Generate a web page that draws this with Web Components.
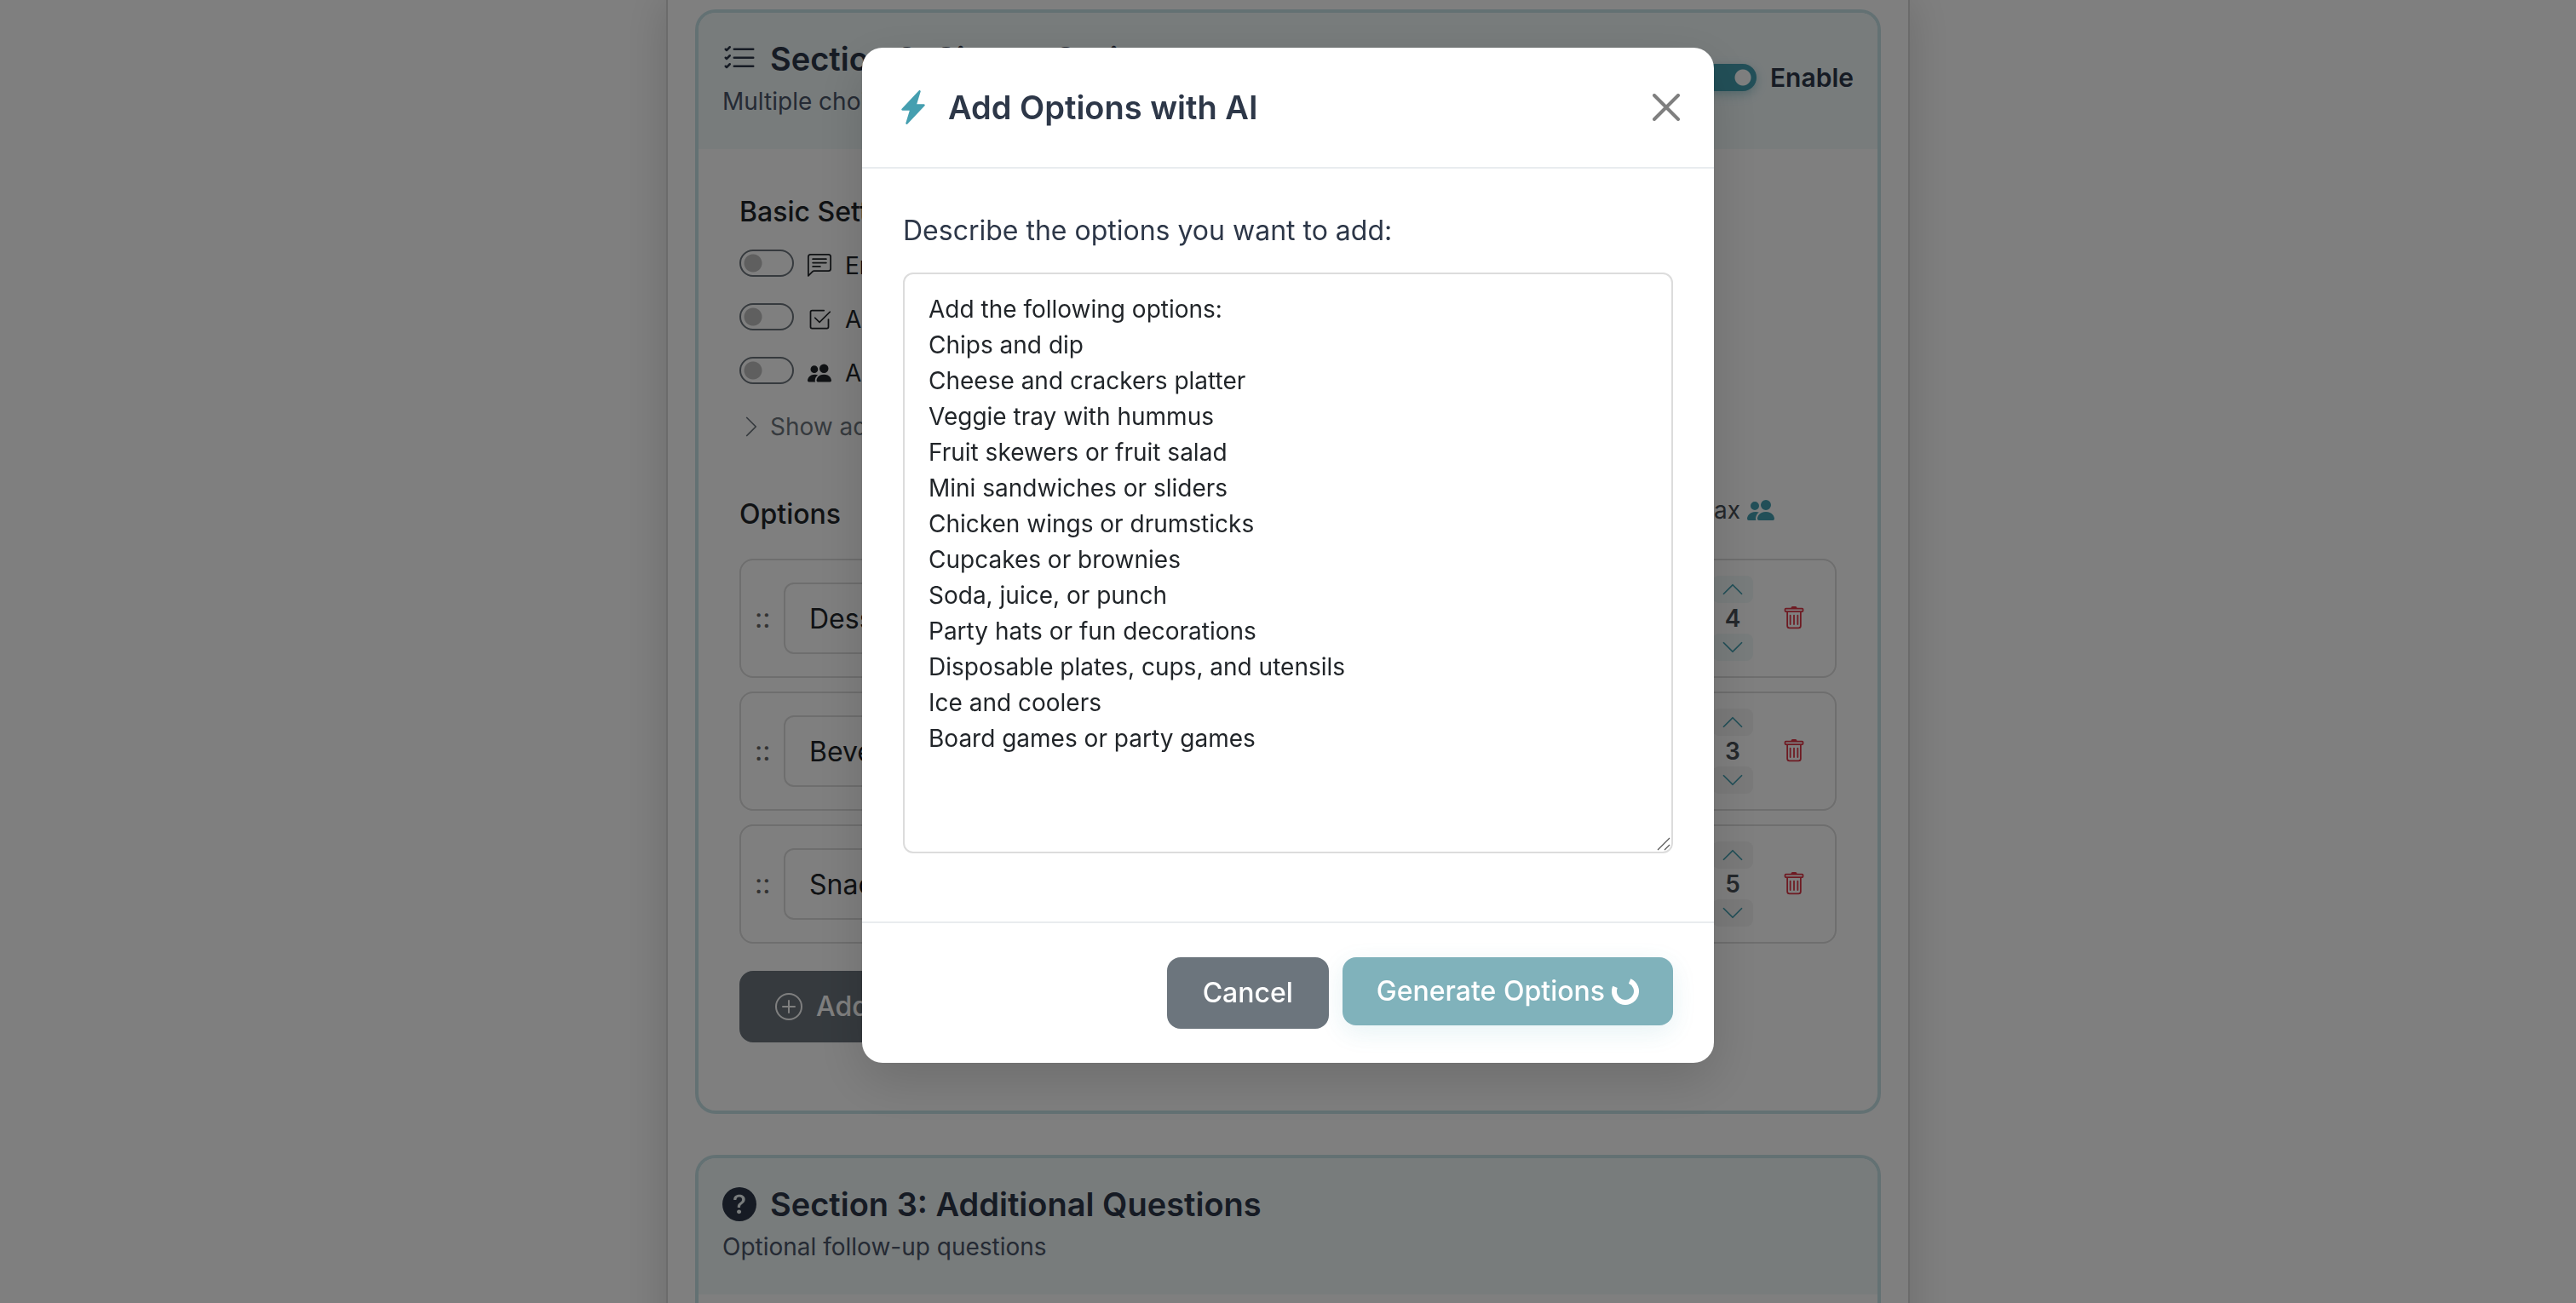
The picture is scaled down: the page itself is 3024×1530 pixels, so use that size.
<!DOCTYPE html>
<html lang="en">
<head>
<meta charset="utf-8">
<title>Event signup editor</title>
<style>
  html, body { margin: 0; height: 100%; overflow: hidden; }
  body {
    background: #fff;
    color: #212529;
    font-family: Inter, "Liberation Sans", sans-serif;
    font-size: 28px;
    line-height: 42px;
    --teal: #459fb0;
    --navy: #2d3748;
    --slate: #4a5568;
    --muted: #6c757d;
    --line: #dcdcdc;
    --heading: Inter, "Liberation Sans", sans-serif;
  }
</style>
</head>
<body>
<signup-editor></signup-editor>
<ai-options-dialog heading="Add Options with AI"></ai-options-dialog>

<script>
const ICONS = {
  'list-check': '<path d="M5 11.5a.5.5 0 0 1 .5-.5h9a.5.5 0 0 1 0 1h-9a.5.5 0 0 1-.5-.5m0-4a.5.5 0 0 1 .5-.5h9a.5.5 0 0 1 0 1h-9a.5.5 0 0 1-.5-.5m0-4a.5.5 0 0 1 .5-.5h9a.5.5 0 0 1 0 1h-9a.5.5 0 0 1-.5-.5M3.854 2.146a.5.5 0 0 1 0 .708l-1.5 1.5a.5.5 0 0 1-.708 0l-.5-.5a.5.5 0 1 1 .708-.708L2 3.293l1.146-1.147a.5.5 0 0 1 .708 0m0 4a.5.5 0 0 1 0 .708l-1.5 1.5a.5.5 0 0 1-.708 0l-.5-.5a.5.5 0 1 1 .708-.708L2 7.293l1.146-1.147a.5.5 0 0 1 .708 0m0 4a.5.5 0 0 1 0 .708l-1.5 1.5a.5.5 0 0 1-.708 0l-.5-.5a.5.5 0 0 1 .708-.708l.146.147 1.146-1.147a.5.5 0 0 1 .708 0"/>',
  'question': '<path d="M16 8A8 8 0 1 1 0 8a8 8 0 0 1 16 0M5.496 6.033h.825c.138 0 .248-.113.266-.25.09-.656.54-1.134 1.342-1.134.686 0 1.314.343 1.314 1.168 0 .635-.374.927-.965 1.371-.673.489-1.206 1.06-1.168 1.987l.003.217a.25.25 0 0 0 .25.246h.811a.25.25 0 0 0 .25-.25v-.105c0-.718.273-.927 1.01-1.486.609-.463 1.244-.977 1.244-2.056 0-1.511-1.276-2.241-2.673-2.241-1.267 0-2.655.59-2.75 2.286a.237.237 0 0 0 .241.247m2.325 6.443c.61 0 1.029-.394 1.029-.927 0-.552-.42-.94-1.029-.94-.584 0-1.009.388-1.009.94 0 .533.425.927 1.01.927z"/>',
  'chat': '<path d="M14 1a1 1 0 0 1 1 1v8a1 1 0 0 1-1 1H4.414A2 2 0 0 0 3 11.586l-2 2V2a1 1 0 0 1 1-1zM2 0a2 2 0 0 0-2 2v12.793a.5.5 0 0 0 .854.353l2.853-2.853A1 1 0 0 1 4.414 12H14a2 2 0 0 0 2-2V2a2 2 0 0 0-2-2z"/><path d="M3 3.5a.5.5 0 0 1 .5-.5h9a.5.5 0 0 1 0 1h-9a.5.5 0 0 1-.5-.5M3 6a.5.5 0 0 1 .5-.5h9a.5.5 0 0 1 0 1h-9A.5.5 0 0 1 3 6m0 2.5a.5.5 0 0 1 .5-.5h5a.5.5 0 0 1 0 1h-5a.5.5 0 0 1-.5-.5"/>',
  'check-square': '<path d="M3 14.5A1.5 1.5 0 0 1 1.5 13V3A1.5 1.5 0 0 1 3 1.5h8a.5.5 0 0 1 0 1H3a.5.5 0 0 0-.5.5v10a.5.5 0 0 0 .5.5h10a.5.5 0 0 0 .5-.5V8a.5.5 0 0 1 1 0v5a1.5 1.5 0 0 1-1.5 1.5z"/><path d="m8.354 10.354 7-7a.5.5 0 0 0-.708-.708L8 9.293 5.354 6.646a.5.5 0 1 0-.708.708l3 3a.5.5 0 0 0 .708 0"/>',
  'people': '<path d="M7 14s-1 0-1-1 1-4 5-4 5 3 5 4-1 1-1 1zm4-6a3 3 0 1 0 0-6 3 3 0 0 0 0 6m-5.784 6A2.24 2.24 0 0 1 5 13c0-1.355.68-2.75 1.936-3.72A6.3 6.3 0 0 0 5 9c-4 0-5 3-5 4s1 1 1 1zM4.5 8a2.5 2.5 0 1 0 0-5 2.5 2.5 0 0 0 0 5"/>',
  'chevron-right': '<path d="M5 2l6 6-6 6" fill="none" stroke="currentColor" stroke-linecap="round" stroke-linejoin="round"/>',
  'chevron-up': '<path d="M2 11l6-6 6 6" fill="none" stroke="currentColor" stroke-linecap="round" stroke-linejoin="round"/>',
  'chevron-down': '<path d="M2 5l6 6 6-6" fill="none" stroke="currentColor" stroke-linecap="round" stroke-linejoin="round"/>',
  'trash': '<path d="M5.5 5.5A.5.5 0 0 1 6 6v6a.5.5 0 0 1-1 0V6a.5.5 0 0 1 .5-.5m2.5 0a.5.5 0 0 1 .5.5v6a.5.5 0 0 1-1 0V6a.5.5 0 0 1 .5-.5m3 .5a.5.5 0 0 0-1 0v6a.5.5 0 0 0 1 0z"/><path d="M14.5 3a1 1 0 0 1-1 1H13v9a2 2 0 0 1-2 2H5a2 2 0 0 1-2-2V4h-.5a1 1 0 0 1-1-1V2a1 1 0 0 1 1-1H6a1 1 0 0 1 1-1h2a1 1 0 0 1 1 1h3.5a1 1 0 0 1 1 1zM4.118 4 4 4.059V13a1 1 0 0 0 1 1h6a1 1 0 0 0 1-1V4.059L11.882 4zM2.5 3h11V2h-11z"/>',
  'plus-circle': '<path d="M8 15A7 7 0 1 1 8 1a7 7 0 0 1 0 14m0 1A8 8 0 1 0 8 0a8 8 0 0 0 0 16"/><path d="M8 4a.5.5 0 0 1 .5.5v3h3a.5.5 0 0 1 0 1h-3v3a.5.5 0 0 1-1 0v-3h-3a.5.5 0 0 1 0-1h3v-3A.5.5 0 0 1 8 4"/>',
  'bolt': '<path d="M11.251.068a.5.5 0 0 1 .227.58L9.677 6.5H13a.5.5 0 0 1 .364.843l-8 8.5a.5.5 0 0 1-.842-.49L6.323 9.5H3a.5.5 0 0 1-.364-.843l8-8.5a.5.5 0 0 1 .615-.09z"/>',
  'close': '<path d="M1 1l14 14M15 1L1 15" fill="none" stroke="currentColor" stroke-width="2" stroke-linecap="round"/>',
  'spinner': '<path d="M10.55 2A6.5 6.5 0 1 1 2 5.45" fill="none" stroke="currentColor" stroke-width="3"/>',
  'resizer': '<path d="M1 15L15 1M9 15l6-6" fill="none" stroke="currentColor" stroke-width="1.2"/>'
};

function define(name, html, setup) {
  const template = document.createElement('template');
  template.innerHTML = html;
  customElements.define(name, class extends HTMLElement {
    constructor() {
      super();
      this.attachShadow({ mode: 'open' }).append(template.content.cloneNode(true));
    }
    connectedCallback() {
      if (setup) setup(this, this.shadowRoot);
    }
  });
}

define('app-icon', `
  <style>
    :host { display: block; flex: none; width: var(--icon-size, 28px); height: var(--icon-size, 28px); }
    svg { display: block; width: 100%; height: 100%; }
  </style>
  <svg viewBox="0 0 16 16" fill="currentColor" aria-hidden="true"></svg>`,
  (host, root) => { root.querySelector('svg').innerHTML = ICONS[host.getAttribute('name')]; });

define('app-button', `
  <style>
    :host { display: block; }
    button {
      display: flex; align-items: center; gap: 16px;
      padding: 16px 40px; border: 2px solid var(--muted); border-radius: 16px;
      background: var(--muted); color: #fff;
      font: 500 32px/48px Inter, "Liberation Sans", sans-serif;
      --icon-size: 32px;
    }
    :host([primary]) button {
      gap: 8px; border: 0; background: #3d8998; opacity: .65; font-weight: 600;
      box-shadow: 0 8px 30px rgba(69, 159, 176, .2);
    }
    :host([primary]) button { font-weight: 500; }
  </style>
  <button type="button"><slot></slot></button>`,
  (host, root) => { root.querySelector('button').disabled = host.hasAttribute('busy'); });

define('toggle-switch', `
  <style>
    :host { display: block; }
    label { display: flex; align-items: flex-start; gap: 16px; color: #212529; }
    input {
      appearance: none; flex: none; box-sizing: border-box;
      width: 64px; height: 32px; margin: 2px 0 0; padding: 0;
      border: 2px solid var(--muted); border-radius: 16px;
      background: radial-gradient(circle at 14px 14px, #bfbfbf 10px, transparent 11px);
    }
    :host([checked]) label { align-items: center; color: var(--navy); font-weight: 600; font-size: 30px; }
    :host([checked]) input {
      margin: 0; border: 0;
      background: radial-gradient(circle at 48px 16px, #fff 9px, transparent 10px), var(--teal);
      box-shadow: 0 4px 12px rgba(69, 159, 176, .4);
    }
    span { display: flex; align-items: center; gap: 16px; }
  </style>
  <label><input type="checkbox" role="switch"><span><slot></slot></span></label>`,
  (host, root) => { root.querySelector('input').checked = host.hasAttribute('checked'); });

define('section-card', `
  <style>
    :host {
      display: block; border: 4px solid rgba(69, 159, 176, .3); border-radius: 24px;
      background: #fff; background-clip: padding-box; overflow: hidden;
    }
    header {
      display: flex; justify-content: space-between; align-items: flex-start;
      padding: 32px 28px 35px; background: #f0f8f9;
    }
    h2 {
      display: flex; align-items: center; gap: 16px; margin: 0 0 7px;
      font: 600 38px/44px var(--heading); color: var(--navy); --icon-size: 40px;
    }
    p { margin: 0; color: var(--slate); }
    .action { padding-top: 23px; }
    .body { padding: 50px 48px 80px; }
  </style>
  <header>
    <div>
      <h2><app-icon></app-icon><span></span></h2>
      <p></p>
    </div>
    <div class="action"><slot name="action"></slot></div>
  </header>
  <div class="body"><slot></slot></div>`,
  (host, root) => {
    const icon = document.createElement('app-icon');
    icon.setAttribute('name', host.getAttribute('icon'));
    root.querySelector('app-icon').replaceWith(icon);
    root.querySelector('h2 span').textContent = host.getAttribute('heading');
    root.querySelector('p').textContent = host.getAttribute('subheading');
  });

define('quantity-stepper', `
  <style>
    :host { display: flex; flex-direction: column; width: 48px; --step: #f5f5f5; }
    :host([active]) { --step: #f0f8f8; }
    button {
      display: flex; align-items: center; justify-content: center;
      height: 32px; padding: 0; border: 0; border-radius: 8px;
      background: var(--step); color: var(--teal);
    }
    output { font-weight: 600; line-height: 36px; text-align: center; color: #495057; }
  </style>
  <button type="button" aria-label="Increase"><app-icon name="chevron-up"></app-icon></button>
  <output></output>
  <button type="button" aria-label="Decrease"><app-icon name="chevron-down"></app-icon></button>`,
  (host, root) => { root.querySelector('output').textContent = host.getAttribute('value'); });

define('option-row', `
  <style>
    :host {
      display: flex; align-items: center; padding: 18px 16px;
      border: 2px solid var(--line); border-radius: 16px;
    }
    .grip { width: 34px; font-size: 32px; color: #666; }
    input {
      flex: 1; min-width: 0; box-sizing: border-box; height: 84px; margin: 0 24px 0 0; padding: 0 28px;
      border: 2px solid var(--line); border-radius: 12px; background: #fff;
      font: 32px/48px Inter, "Liberation Sans", sans-serif; color: #212529;
    }
    .remove {
      display: flex; justify-content: center; width: 64px; margin-left: 16px; padding: 0;
      border: 0; background: none; color: #dc3545;
    }
  </style>
  <span class="grip">::</span>
  <input type="text" aria-label="Option name">
  <quantity-stepper></quantity-stepper>
  <button class="remove" type="button" aria-label="Delete option"><app-icon name="trash"></app-icon></button>`,
  (host, root) => {
    root.querySelector('input').value = host.getAttribute('name');
    const stepper = document.createElement('quantity-stepper');
    stepper.setAttribute('value', host.getAttribute('max'));
    stepper.toggleAttribute('active', host.hasAttribute('active'));
    root.querySelector('quantity-stepper').replaceWith(stepper);
  });

define('signup-editor', `
  <style>
    :host { display: block; height: 100%; overflow: hidden; }
    main {
      display: flex; flex-direction: column; gap: 48px;
      box-sizing: border-box; width: 100%; max-width: 1460px; min-height: 100%; margin: 0 auto;
      padding: 11px 32px; border: solid #d6d6d6; border-width: 0 2px;
      background: #fff; box-shadow: 0 0 50px rgba(0, 0, 0, .16);
    }
    h3 { margin: 0; font-weight: 500; font-size: 32px; line-height: 48px; color: #212529; }
    .settings { display: flex; flex-direction: column; align-items: flex-start; gap: 21px; margin: 18px 0 58px; }
    .more {
      display: flex; align-items: center; gap: 8px; padding: 0; border: 0; background: none;
      font: inherit; color: var(--muted);
    }
    .options-head { display: flex; justify-content: space-between; align-items: flex-start; margin-bottom: 28px; }
    .max {
      display: flex; align-items: center; gap: 8px; padding-right: 73px;
      line-height: 38px; color: #495057; --icon-size: 32px;
    }
    .max app-icon { color: var(--teal); }
    .options { display: flex; flex-direction: column; gap: 16px; margin-bottom: 32px; }
    .add { display: flex; }
  </style>
  <main>
    <section-card icon="list-check" heading="Section 2: Signup Options" subheading="Multiple choice options">
      <toggle-switch slot="action" checked>Enable</toggle-switch>
      <h3>Basic Settings</h3>
      <div class="settings">
        <toggle-switch><app-icon name="chat"></app-icon>Enable comments</toggle-switch>
        <toggle-switch><app-icon name="check-square"></app-icon>Allow multiple</toggle-switch>
        <toggle-switch><app-icon name="people"></app-icon>Allow guests</toggle-switch>
        <button class="more" type="button"><app-icon name="chevron-right"></app-icon>Show advanced</button>
      </div>
      <div class="options-head">
        <h3>Options</h3>
        <div class="max">Max<app-icon name="people"></app-icon></div>
      </div>
      <div class="options">
        <option-row name="Desserts" max="4" active></option-row>
        <option-row name="Beverages" max="3"></option-row>
        <option-row name="Snacks" max="5"></option-row>
      </div>
      <div class="add"><app-button><app-icon name="plus-circle"></app-icon>Add Option</app-button></div>
    </section-card>
    <section-card icon="question" heading="Section 3: Additional Questions" subheading="Optional follow-up questions"></section-card>
  </main>`);

define('ai-options-dialog', `
  <style>
    :host {
      position: fixed; inset: 0; display: flex; justify-content: center; align-items: flex-start;
      padding-top: 56px; background: rgba(0, 0, 0, .5);
    }
    section {
      width: 1000px; max-width: 100%; border-radius: 24px; background: #fff;
      box-shadow: 0 20px 60px rgba(0, 0, 0, .15);
    }
    header {
      display: flex; align-items: center; padding: 46px 40px; border-bottom: 2px solid #e9ecef;
    }
    header app-icon { --icon-size: 40px; color: var(--teal); }
    h2 { flex: 1; margin: 0 0 0 21px; font: 600 38px/48px var(--heading); color: var(--navy); }
    .close { padding: 0; border: 0; background: none; color: #7f7f7f; }
    .close app-icon { --icon-size: 32px; color: inherit; }
    form { padding: 48px 48px 80px; }
    label { display: block; margin-bottom: 24px; font-size: 32px; line-height: 50px; color: var(--navy); }
    .field { position: relative; }
    textarea {
      display: block; box-sizing: border-box; width: 100%; height: 682px; padding: 20px 28px;
      border: 2px solid #dcdcdc; border-radius: 12px; resize: none; outline: 0;
      font: inherit; color: #212529; background: #fff;
    }
    .field app-icon { position: absolute; right: 3px; bottom: 3px; --icon-size: 16px; color: #555; pointer-events: none; }
    footer {
      display: flex; justify-content: flex-end; align-items: flex-start; gap: 16px;
      padding: 40px 48px; border-top: 2px solid #e9ecef;
    }
  </style>
  <section role="dialog" aria-modal="true" aria-labelledby="title">
    <header>
      <app-icon name="bolt"></app-icon>
      <h2 id="title"></h2>
      <button class="close" type="button" aria-label="Close"><app-icon name="close"></app-icon></button>
    </header>
    <form>
      <label for="prompt">Describe the options you want to add:</label>
      <div class="field">
        <textarea id="prompt" spellcheck="false">Add the following options:
Chips and dip
Cheese and crackers platter
Veggie tray with hummus
Fruit skewers or fruit salad
Mini sandwiches or sliders
Chicken wings or drumsticks
Cupcakes or brownies
Soda, juice, or punch
Party hats or fun decorations
Disposable plates, cups, and utensils
Ice and coolers
Board games or party games</textarea>
        <app-icon name="resizer"></app-icon>
      </div>
    </form>
    <footer>
      <app-button>Cancel</app-button>
      <app-button primary busy>Generate Options<app-icon name="spinner"></app-icon></app-button>
    </footer>
  </section>`,
  (host, root) => { root.querySelector('h2').textContent = host.getAttribute('heading'); });
</script>
</body>
</html>
